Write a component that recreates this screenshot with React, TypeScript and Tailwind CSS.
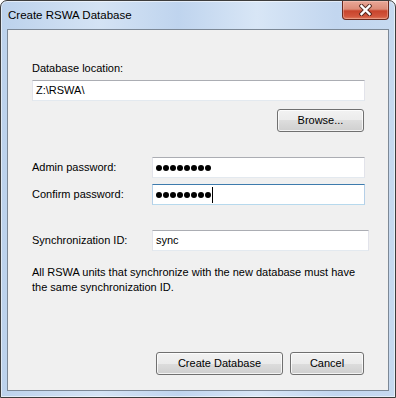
import React from "react";

const font = { fontFamily: '"Liberation Sans", Arial, sans-serif' };

function Dots({ n }: { n: number }) {
  return (
    <div className="flex items-center gap-[1px]">
      {Array.from({ length: n }).map((_, i) => (
        <span key={i} className="block w-[6px] h-[6px] rounded-full bg-black" />
      ))}
    </div>
  );
}

function WinButton({ label, w }: { label: string; w: string }) {
  return (
    <div
      className={`${w} h-[23px] rounded-[3px] border border-[#707070] bg-[linear-gradient(#f2f2f2_0%,#ebebeb_50%,#dddddd_50%,#cfcfcf_100%)] shadow-[inset_0_0_0_1px_rgba(255,255,255,0.75)] flex items-center justify-center text-[11px] text-black`}
    >
      {label}
    </div>
  );
}

export default function App() {
  return (
    <div
      className="w-[396px] h-[398px] flex flex-col rounded-t-[7px] border border-[#3d3d3d] bg-[linear-gradient(to_right,#bcd2ec,#d4e3f4_25%,#bfd4ee_45%,#d8e6f6_65%,#c2d6ef_85%,#c6d9f0)] shadow-[inset_0_0_0_1px_rgba(255,255,255,0.55)] overflow-hidden"
      style={font}
    >
      <div className="h-[28px] flex justify-between">
        <div className="self-center pl-[7px] text-[11.5px] text-black leading-[15px]">Create RSWA Database</div>
        <div className="self-start mr-[6px] w-[47px] h-[19px] rounded-b-[4px] border border-t-0 border-[#6b2a1e] bg-[linear-gradient(#e9a797_0%,#dc8c78_45%,#c8442c_55%,#d2563d_85%,#e07c5e_100%)] shadow-[inset_0_0_0_1px_rgba(255,220,210,0.35)] flex items-center justify-center">
          <svg width="13" height="12" viewBox="0 0 13 12">
            <path d="M2.5 2 L10.5 10 M10.5 2 L2.5 10" stroke="#47221b" strokeWidth="4.4" strokeLinecap="square" opacity="0.85" />
            <path d="M2.5 2 L10.5 10 M10.5 2 L2.5 10" stroke="#ffffff" strokeWidth="2.4" strokeLinecap="square" />
          </svg>
        </div>
      </div>
      <div className="flex-1 mx-[6px] mb-[6px] border border-[#7c8896] bg-[#f0f0f0] flex flex-col pl-[24px] pr-[24px] text-[11px] text-black">
        <div className="mt-[31px] leading-[15px] h-[15px]">Database location:</div>
        <div className="mt-[4px] h-[21px] w-[333px] bg-white border border-t-[#abadb3] border-x-[#e2e3ea] border-b-[#e3e9ef] flex items-center pl-[3px] leading-[15px]">
          Z:\RSWA\
        </div>
        <div className="mt-[8px] flex justify-end">
          <WinButton label="Browse..." w="w-[87px]" />
        </div>
        <div className="mt-[25px] flex items-center h-[21px]">
          <div className="w-[120px] shrink-0 leading-[15px]">Admin password:</div>
          <div className="h-[21px] w-[213px] shrink-0 bg-white border border-t-[#abadb3] border-x-[#e2e3ea] border-b-[#e3e9ef] flex items-center pl-[3px]">
            <Dots n={8} />
          </div>
        </div>
        <div className="mt-[6px] flex items-center h-[21px]">
          <div className="w-[120px] shrink-0 leading-[15px]">Confirm password:</div>
          <div className="h-[21px] w-[213px] shrink-0 bg-white border border-t-[#3d7bad] border-x-[#b5cfe7] border-b-[#b7d9ed] flex items-center pl-[3px]">
            <Dots n={8} />
            <span className="block ml-[1px] w-[1px] h-[16px] bg-black" />
          </div>
        </div>
        <div className="mt-[25px] flex items-center h-[21px]">
          <div className="w-[120px] shrink-0 leading-[15px]">Synchronization ID:</div>
          <div className="h-[21px] w-[217px] shrink-0 bg-white border border-t-[#abadb3] border-x-[#e2e3ea] border-b-[#e3e9ef] flex items-center pl-[3px] leading-[15px]">
            sync
          </div>
        </div>
        <div className="mt-[14px] leading-[15px] whitespace-nowrap">
          All RSWA units that synchronize with the new database must have
          <br />
          the same synchronization ID.
        </div>
        <div className="mt-auto mb-[15px] flex justify-end gap-[7px]">
          <WinButton label="Create Database" w="w-[127px]" />
          <WinButton label="Cancel" w="w-[74px]" />
        </div>
      </div>
    </div>
  );
}
